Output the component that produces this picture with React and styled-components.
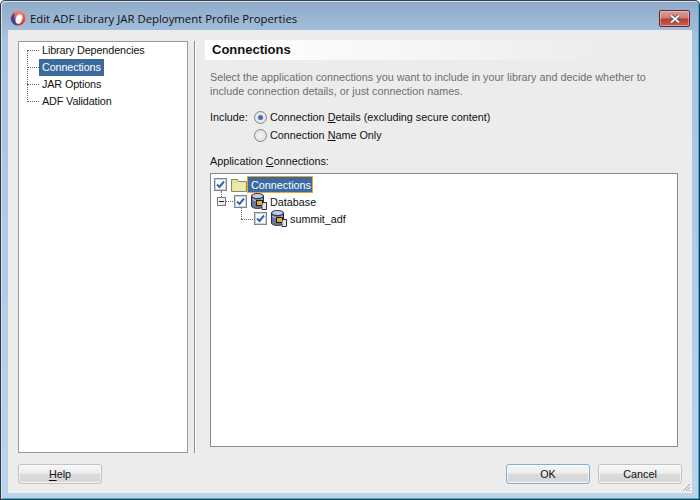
import React from "react";
import styled, { createGlobalStyle } from "styled-components";

const Global = createGlobalStyle`
  html, body { margin: 0; padding: 0; background: #fff; }
  * { box-sizing: border-box; }
`;

const Window = styled.div`
  width: 700px; height: 500px; display: flex; flex-direction: column;
  position: relative; overflow: hidden;
  background: linear-gradient(180deg, #8fabc9 0%, #a9c4e0 8%, #bcd3ec 100%);
  border: 1px solid #2f3a44; border-top-color: #3c4650; border-radius: 5px 5px 0 0;
  box-shadow: inset 1px 1px 0 #d5e3f1, inset -1px -1px 0 #2fb4e0;
  font-family: "Liberation Sans", sans-serif; font-size: 10.8px; color: #111;
`;
const TitleBar = styled.div`
  height: 29px; flex: none; display: flex; align-items: center; padding: 5px 9px 0 9px; gap: 4px;
`;
const TitleText = styled.div`
  flex: 1; font-family: "Open Sans", sans-serif; font-size: 11.35px; color: #101010;
`;
const CloseBtn = styled.div`
  width: 31px; height: 17px; margin-top: 1px; border: 1px solid #5c2a35; border-radius: 2px;
  background: linear-gradient(180deg, #dc9c92 0%, #cf7d72 48%, #b93a2c 52%, #c8604f 100%);
  box-shadow: inset 0 0 0 1px rgba(255,220,210,.45);
  display: flex; align-items: center; justify-content: center;
`;
const Client = styled.div`
  flex: 1; margin: 0 7px 7px 7px; background: #ececec; display: flex; flex-direction: column;
  padding: 11px 10px 9px 10px; position: relative;
`;
const Main = styled.div`
  height: 412px; flex: none; display: flex;
`;
const NavTree = styled.div`
  width: 170px; flex: none; background: #fff; border: 1px solid #9a9a9a;
  padding: 0 0 0 20px; position: relative; letter-spacing: -0.12px;
`;
const NavRow = styled.div`
  height: 17px; display: flex; align-items: center; position: relative;
  &::before {
    content: ""; position: absolute; left: -12px; top: 8px; width: 12px;
    border-top: 1px dotted #666;
  }
`;
const NavLine = styled.div`
  position: absolute; left: 8px; top: 8px; height: 52px; border-left: 1px dotted #666;
`;
const NavLabel = styled.span`
  height: 17px; min-width: ${p => (p.$sel ? "65px" : "0")}; line-height: 17px; padding: 0 2px 0 3px; white-space: nowrap;
  background: ${p => (p.$sel ? "#3a6a9e" : "transparent")};
  color: ${p => (p.$sel ? "#fff" : "#111")};
`;
const Divider = styled.div`
  width: 1px; flex: none; margin: 0 10px 0 6px; background: #8e8e8e; box-shadow: 1px 0 0 #fafafa;
`;
const Panel = styled.div`
  flex: 1; display: flex; flex-direction: column; min-width: 0;
`;
const Header = styled.div`
  height: 20px; margin-top: -1px; flex: none; padding-left: 7px;
  background: linear-gradient(90deg, #fff 0%, #f6f6f6 45%, #ececec 85%);
  font-weight: bold; font-size: 13px; line-height: 20px; color: #111;
`;
const Description = styled.div`
  margin: 10px 0 0 5px; color: #6e6e6e; line-height: 14px; white-space: nowrap;
`;
const IncludeBlock = styled.div`
  margin: 10px 0 0 5px; display: grid; grid-template-columns: 44px auto; grid-auto-rows: 18px;
  align-items: center;
`;
const OptionRow = styled.div`
  grid-column: 2; display: flex; align-items: center; gap: 3px; white-space: nowrap;
`;
const Radio = styled.span`
  width: 13px; height: 13px; border-radius: 50%; flex: none; border: 1px solid #858585;
  background: radial-gradient(circle, #f4f4f4 0%, #e4e4e4 70%, #fff 100%);
  display: flex; align-items: center; justify-content: center;
  &::after {
    content: ""; width: 5px; height: 5px; border-radius: 50%;
    background: ${p => (p.$on ? "#3f6fb5" : "transparent")};
  }
`;
const SectionLabel = styled.div`
  margin: 10px 0 0 5px; height: 14px; line-height: 14px;
`;
const ConnBox = styled.div`
  margin: 5px 0 0 5px; height: 274px; flex: none; width: 468px; background: #fff;
  border: 1px solid #8c8c8c; position: relative;
`;
const ConnRow = styled.div`
  position: absolute; left: ${p => p.$x}px; top: ${p => p.$y}px; display: flex; align-items: center; height: 17px;
`;
const Check = styled.span`
  width: 13px; height: 13px; flex: none; border: 1px solid #7f858c; background: #fdfdfe;
  box-shadow: inset 0 0 0 1px #cfd3d8; display: flex; align-items: center; justify-content: center;
`;
const ConnLabel = styled.span`
  white-space: nowrap; margin-left: 3px;
`;
const SelLabel = styled.span`
  width: 66px; height: 17px; line-height: 16px; background: #3a6a9e; color: #fff;
  border: 1px solid #e8a33d; padding-left: 3px; white-space: nowrap;
`;
const Dots = styled.div`
  position: absolute; left: ${p => p.$x}px; top: ${p => p.$y}px;
  width: ${p => p.$w || 0}px; height: ${p => p.$h || 0}px;
  ${p => (p.$w ? "border-top: 1px dotted #666;" : "border-left: 1px dotted #666;")}
`;
const Expander = styled.div`
  position: absolute; left: 6px; top: 23px; width: 9px; height: 9px; border: 1px solid #777;
  background: linear-gradient(135deg, #fff, #ddd);
  &::after { content: ""; position: absolute; left: 1px; top: 3px; width: 5px; height: 1px; background: #222; }
`;
const Footer = styled.div`
  display: flex; justify-content: space-between; margin-top: 11px; padding-right: 0;
`;
const FooterRight = styled.div`
  display: flex; gap: 8px;
`;
const Button = styled.div`
  width: 84px; height: 20px; border-radius: 3px; display: flex; align-items: center; justify-content: center;
  border: 1px solid ${p => (p.$def ? "#7fb0d8" : "#c2c2c2")};
  background: linear-gradient(180deg, #f6f6f6 0%, #eeeeee 45%, #dcdcdc 50%, #d6d6d6 85%, #e4e4e4 100%);
  box-shadow: inset 0 0 0 1px rgba(255,255,255,.6);
  color: #111;
  u { text-underline-offset: 2px; }
`;
const Grip = styled.svg`
  position: absolute; right: 1px; bottom: 1px;
`;

const Tick = () => (
  <svg width="9" height="9" viewBox="0 0 9 9">
    <path d="M1 4.500 L3.500 7 L8 1.500" fill="none" stroke="#2f66bb" strokeWidth="2" />
  </svg>
);
const Folder = () => (
  <svg width="16" height="14" viewBox="0 0 16 14" style={{ marginLeft: 4, flex: "none" }}>
    <path d="M.5 13.500V1.500h6l1 2h8v10z" fill="#e6de9c" stroke="#8f8a55" />
    <path d="M1.500 5h13v7.500h-13z" fill="#efe8ae" />
  </svg>
);
const Db = () => (
  <svg width="16" height="17" viewBox="0 0 16 17" style={{ marginLeft: 4, flex: "none" }}>
    <path d="M.5 3v10c0 1.500 3 2.500 6 2.500s6-1 6-2.500V3z" fill="#66769c" stroke="#232a45" />
    <ellipse cx="6.500" cy="3" rx="6" ry="2.500" fill="#c2cbe0" stroke="#232a45" />
    <path d="M1.500 6.500c2 1.300 8 1.300 10 0" fill="none" stroke="#ccd4e6" />
    <rect x="5.500" y="7.500" width="6" height="5" fill="#e3a92b" stroke="#1c1c1c" />
    <path d="M12 9.500h3.500v7H11v-3" fill="#e2e4ea" stroke="#333" />
  </svg>
);
const Logo = () => (
  <svg width="16" height="16" viewBox="0 0 16 16" style={{ flex: "none" }}>
    <defs>
      <linearGradient id="red" x1="0" y1="0" x2="0" y2="1">
        <stop offset="0" stopColor="#f08a7a" />
        <stop offset="1" stopColor="#d8281c" />
      </linearGradient>
    </defs>
    <circle cx="8" cy="8" r="7.500" fill="url(#red)" />
    <path d="M1 9a7 7 0 0 1 4-6c-1.500 3-1 8 2.500 12.500A7 7 0 0 1 1 9z" fill="#1d4fa3" />
    <ellipse cx="9" cy="9" rx="3.200" ry="4.800" transform="rotate(15 9 9)" fill="#fff" />
  </svg>
);

export default function App() {
  const nav = ["Library Dependencies", "Connections", "JAR Options", "ADF Validation"];
  return (
    <Window>
      <Global />
      <TitleBar>
        <Logo />
        <TitleText>Edit ADF Library JAR Deployment Profile Properties</TitleText>
        <CloseBtn>
          <svg width="14" height="10" viewBox="0 0 14 10">
            <path d="M3 1.500 L11 8.500 M11 1.500 L3 8.500" stroke="#4a4a5a" strokeWidth="3.600" />
            <path d="M3 1.500 L11 8.500 M11 1.500 L3 8.500" stroke="#f4f4f8" strokeWidth="2" />
          </svg>
        </CloseBtn>
      </TitleBar>
      <Client>
        <Main>
          <NavTree>
            <NavLine />
            {nav.map(n => (
              <NavRow key={n}>
                <NavLabel $sel={n === "Connections"}>{n}</NavLabel>
              </NavRow>
            ))}
          </NavTree>
          <Divider />
          <Panel>
            <Header>Connections</Header>
            <Description>
              Select the application connections you want to include in your library and decide whether to
              <br />
              include connection details, or just connection names.
            </Description>
            <IncludeBlock>
              <span>Include:</span>
              <OptionRow>
                <Radio $on />
                <span>Connection <u>D</u>etails (excluding secure content)</span>
              </OptionRow>
              <OptionRow>
                <Radio />
                <span>Connection <u>N</u>ame Only</span>
              </OptionRow>
            </IncludeBlock>
            <SectionLabel>Application <u>C</u>onnections:</SectionLabel>
            <ConnBox>
              <Dots $x={10} $y={17} $h={6} />
              <Dots $x={15} $y={27} $w={9} />
              <Dots $x={30} $y={34} $h={11} />
              <Dots $x={30} $y={45} $w={14} />
              <Expander />
              <ConnRow $x={3} $y={2}>
                <Check><Tick /></Check>
                <Folder />
                <SelLabel>Connections</SelLabel>
              </ConnRow>
              <ConnRow $x={23} $y={19}>
                <Check><Tick /></Check>
                <Db />
                <ConnLabel>Database</ConnLabel>
              </ConnRow>
              <ConnRow $x={43} $y={36}>
                <Check><Tick /></Check>
                <Db />
                <ConnLabel>summit_adf</ConnLabel>
              </ConnRow>
            </ConnBox>
          </Panel>
        </Main>
        <Footer>
          <Button><span><u>H</u>elp</span></Button>
          <FooterRight>
            <Button $def>OK</Button>
            <Button>Cancel</Button>
          </FooterRight>
        </Footer>
        <Grip width="10" height="10" viewBox="0 0 10 10">
          <path d="M9 2L2 9M9 5L5 9M9 8L8 9" stroke="#a0a0a0" strokeWidth="1" />
        </Grip>
      </Client>
    </Window>
  );
}
